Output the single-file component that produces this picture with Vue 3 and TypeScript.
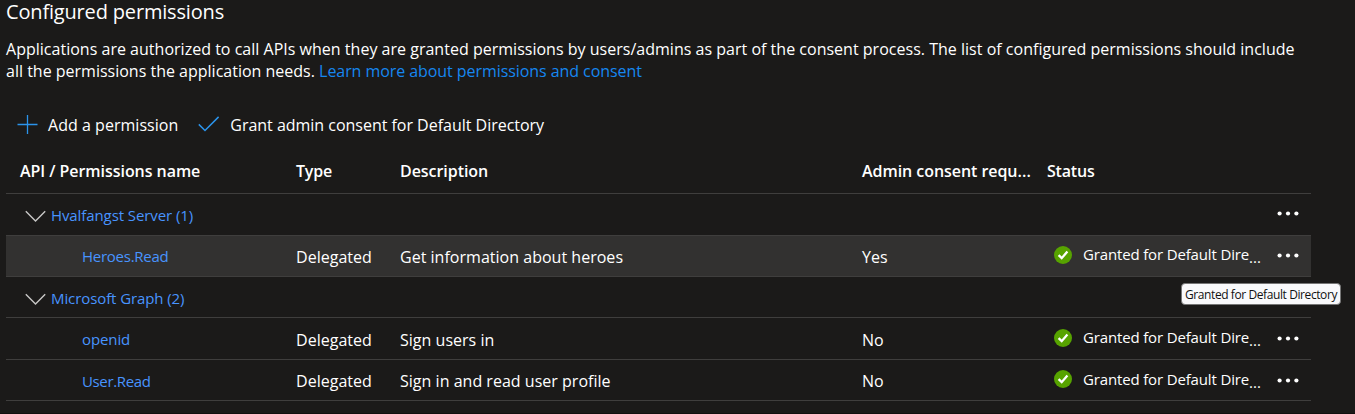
<script setup lang="ts">
interface Permission {
  name: string
  type: string
  description: string
  consent: string
  nameClass: string
  hovered?: boolean
}

interface ApiGroup {
  label: string
  permissions: Permission[]
  showMenu: boolean
}

const groups: ApiGroup[] = [
  {
    label: 'Hvalfangst Server (1)',
    showMenu: true,
    permissions: [
      {
        name: 'Heroes.Read',
        type: 'Delegated',
        description: 'Get information about heroes',
        consent: 'Yes',
        nameClass: 'heroes',
        hovered: true,
      },
    ],
  },
  {
    label: 'Microsoft Graph (2)',
    showMenu: false,
    permissions: [
      { name: 'openid', type: 'Delegated', description: 'Sign users in', consent: 'No', nameClass: 'openid' },
      { name: 'User.Read', type: 'Delegated', description: 'Sign in and read user profile', consent: 'No', nameClass: 'user' },
    ],
  },
]
</script>

<template>
  <main class="page">
    <h2 class="title">Configured permissions</h2>
    <p class="intro">
      <span class="line">Applications are authorized to call APIs when they are granted permissions by users/admins as part of the consent process. The list of configured permissions should include</span>
      <span class="line">all the permissions the application needs. <a class="learn">Learn more about permissions and consent</a></span>
    </p>

    <div class="toolbar">
      <button class="command" type="button">
        <svg class="plus" width="21" height="20" viewBox="0 0 21 20">
          <path d="M0.5 9.5H20.5M10.5 0V19" />
        </svg>
        <span>Add a permission</span>
      </button>
      <button class="command" type="button">
        <svg class="check" width="22" height="20" viewBox="0 0 22 20">
          <path d="M0.8 9.4L7 15.5L20.6 1.9" />
        </svg>
        <span>Grant admin consent for Default Directory</span>
      </button>
    </div>

    <div class="table">
      <div class="row header">
        <span>API / Permissions name</span>
        <span class="tight">Type</span>
        <span>Description</span>
        <span>Admin consent requ<span class="dots-text">...</span></span>
        <span class="tight">Status</span>
      </div>

      <template v-for="group in groups" :key="group.label">
        <div class="row group">
          <div class="group-name">
            <svg width="22" height="14" viewBox="0 0 22 14">
              <path d="M0.8 1.2L10.5 11.1L20.2 1.2" />
            </svg>
            <a>{{ group.label }}</a>
          </div>
          <button v-if="group.showMenu" class="more" type="button">
            <svg width="22" height="5" viewBox="0 0 22 5">
              <circle cx="2.6" cy="2.5" r="2.1" /><circle cx="11" cy="2.5" r="2.1" /><circle cx="19.4" cy="2.5" r="2.1" />
            </svg>
          </button>
        </div>

        <div v-for="item in group.permissions" :key="item.name" class="row item" :class="[item.nameClass, { hovered: item.hovered }]">
          <a class="name">{{ item.name }}</a>
          <span class="cell">{{ item.type }}</span>
          <span class="cell">{{ item.description }}</span>
          <span class="cell">{{ item.consent }}</span>
          <div class="status">
            <svg class="badge" width="18" height="18" viewBox="0 0 18 18">
              <circle cx="9" cy="9" r="9" />
              <path d="M4.6 9.2L7.7 12.2L13.4 5.6" />
            </svg>
            <span class="granted">Granted for Default Dire</span><span class="low-dots">...</span>
          </div>
          <button class="more" type="button">
            <svg width="22" height="5" viewBox="0 0 22 5">
              <circle cx="2.6" cy="2.5" r="2.1" /><circle cx="11" cy="2.5" r="2.1" /><circle cx="19.4" cy="2.5" r="2.1" />
            </svg>
          </button>
        </div>
      </template>
    </div>

    <div class="tooltip" role="tooltip">Granted for Default Directory</div>
  </main>
</template>

<style>
body {
  background: #1b1a19;
}
</style>

<style scoped>
.page {
  position: relative;
  box-sizing: border-box;
  height: 414px;
  background: #1b1a19;
  border-bottom: 1px solid #11100f;
  color: #fff;
  font: 16px/22px "Open Sans", "Noto Sans", sans-serif;
}

.title {
  margin: 0;
  padding-left: 6px;
  height: 38px;
  font-size: 20px;
  font-weight: 400;
  line-height: 24px;
  letter-spacing: -0.17px;
}

.intro {
  margin: 0;
  padding-left: 6px;
}

.line {
  display: block;
  white-space: nowrap;
  letter-spacing: 0.015px;
}

.line + .line {
  letter-spacing: 0;
}

.learn {
  letter-spacing: -0.065px;
}

.toolbar {
  display: flex;
  gap: 20px;
  height: 68px;
  box-sizing: border-box;
  padding: 32px 0 0 17px;
}

.command {
  display: flex;
  gap: 10px;
  height: 22px;
  padding: 0;
  border: 0;
  background: none;
  color: inherit;
  font: inherit;
  letter-spacing: 0.03px;
}

.command + .command {
  letter-spacing: -0.02px;
}

svg {
  flex: none;
  display: block;
}

.command svg {
  fill: none;
  stroke: #2b93ea;
}

.plus {
  margin-top: 1px;
  stroke-width: 1.3;
}

.check {
  margin-top: 1px;
  stroke-width: 1.5;
}

.table {
  width: 1305px;
  margin-left: 6px;
}

.row {
  display: grid;
  grid-template-columns: 276px 104px 462px 185px 230px 1fr;
  box-sizing: border-box;
  height: 41px;
  padding: 10px 0 0 14px;
  border-bottom: 1px solid #3f3e3d;
  white-space: nowrap;
}

.header {
  height: 44px;
  font-weight: 600;
  letter-spacing: -0.05px;
}

.tight {
  letter-spacing: -0.2px;
}

.dots-text {
  letter-spacing: 0.1px;
}

.group {
  grid-template-columns: 1257px 1fr;
}

.header + .group,
.openid {
  height: 42px;
}

.group-name {
  display: flex;
  gap: 4px;
  padding-left: 5px;
  font-size: 15px;
  letter-spacing: -0.09px;
}

.group-name svg {
  margin-top: 6px;
  fill: none;
  stroke: #c8c7c6;
  stroke-width: 1.4;
}

a {
  color: #4894fe;
}

a.learn {
  color: #1687f0;
}

.name {
  padding-left: 62px;
  font-size: 15px;
  letter-spacing: -0.1px;
}

.heroes .name {
  margin-top: -1px;
  letter-spacing: -0.26px;
}

.user .name {
  letter-spacing: -0.36px;
}

.cell {
  letter-spacing: 0.02px;
}

.openid .cell {
  margin-top: 1px;
}

.hovered {
  background: #323130;
}

.status {
  display: flex;
  margin-top: -2px;
  padding-left: 7px;
  font-size: 15px;
}

.heroes .status {
  margin-top: -3px;
}

.badge {
  margin: 2px 11px 0 0;
}

.heroes .badge,
.openid .badge {
  margin-top: 3px;
}

.badge circle {
  fill: #57a300;
}

.badge path {
  fill: none;
  stroke: #fff;
  stroke-width: 2.3;
}

.granted {
  letter-spacing: -0.15px;
}

.low-dots {
  padding-top: 3px;
}

.more {
  height: 5px;
  margin-top: 8px;
  padding: 0;
  border: 0;
  background: none;
}

.group .more,
.heroes .more {
  margin-top: 7px;
}

.item .more {
  margin-left: 0;
}

.more svg {
  fill: #fff;
}

.tooltip {
  position: absolute;
  left: 1181px;
  top: 283px;
  box-sizing: border-box;
  width: 160px;
  height: 22px;
  padding-left: 3px;
  border: 1px solid #767676;
  border-radius: 4px;
  background: #f9f9fb;
  color: #111;
  font-size: 12px;
  line-height: 21px;
  letter-spacing: -0.41px;
  white-space: nowrap;
}
</style>
